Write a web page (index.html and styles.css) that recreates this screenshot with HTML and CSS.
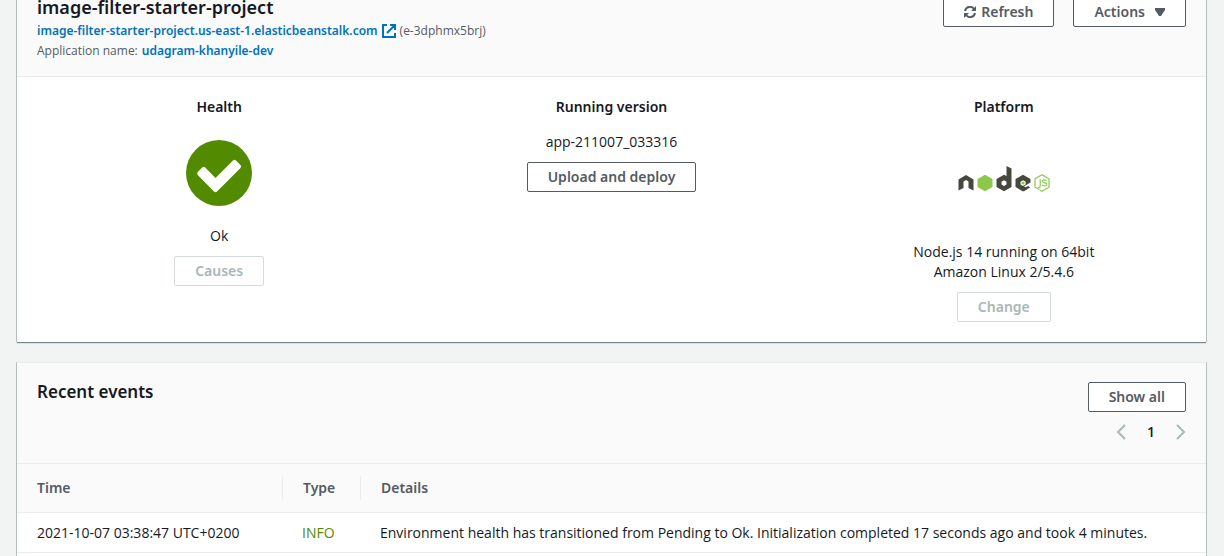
FILE: index.html
```html
<!DOCTYPE html>
<html lang="en">
<head>
<meta charset="utf-8">
<meta name="viewport" content="width=device-width, initial-scale=1">
<title>image-filter-starter-project</title>
<link rel="stylesheet" href="styles.css">
</head>
<body>
<main class="page">
  <section class="panel">
    <header class="panel-header">
      <div class="env-info">
        <h1 class="title">image-filter-starter-project</h1>
        <p class="meta">
          <a class="link" href="#">image-filter-starter-project.us-east-1.elasticbeanstalk.com</a>
          <svg class="external" viewBox="0 0 14 14" fill="none" stroke="currentColor" stroke-width="2" aria-hidden="true"><path d="M5 1H1v12h12V9M8 1h5v5M13 1L5 9"/></svg>
          <span>(e-3dphmx5brj)</span>
        </p>
        <p class="meta">Application name: <a class="link" href="#">udagram-khanyile-dev</a></p>
      </div>
      <div class="actions">
        <button class="btn" type="button">
          <svg class="refresh" viewBox="0 0 12 12" fill="none" stroke="currentColor" stroke-width="2" aria-hidden="true"><path d="M1 5a5 5 0 0 1 9-2M11 7a5 5 0 0 1-9 2"/><path d="M12 0v5H7zM0 12V7h5z" fill="currentColor" stroke="none"/></svg>
          Refresh
        </button>
        <button class="btn" type="button">
          Actions
          <svg class="caret" viewBox="0 0 10 8" fill="currentColor" aria-hidden="true"><path d="M0 0h10v2L6 8H4L0 2z"/></svg>
        </button>
      </div>
    </header>
    <div class="summary">
      <section class="column">
        <h2 class="label">Health</h2>
        <svg class="health" viewBox="0 0 66 66" role="img" aria-label="Ok"><circle cx="33" cy="33" r="33" fill="#538b00"/><path d="M12.200 31.500l4-4q1.500-1.500 3 0L29.500 38 47 20.500q1.500-1.500 3 0l4.500 4.500q1.500 1.500 0 3L31 51.500q-1.500 1.500-3 0L12.200 35.500q-2-2 0-4z" fill="#fff"/></svg>
        <p class="value">Ok</p>
        <button class="btn" type="button" disabled>Causes</button>
      </section>
      <section class="column">
        <h2 class="label">Running version</h2>
        <p class="value">app-211007_033316</p>
        <button class="btn" type="button">Upload and deploy</button>
      </section>
      <section class="column">
        <h2 class="label">Platform</h2>
        <svg class="node-logo" viewBox="0 0 92 100" role="img" aria-label="node js">
          <g fill="#46483e">
            <path d="M0.500 39.500l7.500-4.500 7.500 4.500v11l-5-2.500v-6.500L8 40l-2.500 1.500V48l-5 2.500z"/>
            <path fill-rule="evenodd" d="M48.500 26l5 2.500v18.500L46 51.300 38.500 47v-8l7.500-4.300 2.500 1.300zM46 40.300l-2.500 1.400v2.900L46 46l2.500-1.400v-2.900z"/>
            <path d="M65 34.700l7.500 4.300v3.500L66 46.300l1.500 1 3-1.300 1.500 1.500-6 3.800h-1.500L57.500 47v-8z"/>
          </g>
          <path fill="#fff" d="M65 40.300l2.700 1.500v2.400L65 46l-2.500-1.500v-2.700z"/>
          <circle cx="65" cy="43" r="1.600" fill="#8cc84b"/>
          <path fill="#8cc84b" d="M27 34.700l7.500 4.300v8L27 51.300 19.500 47v-8z"/>
          <g fill="none" stroke="#8cc84b" stroke-width="1.200"><path d="M81.500 49.500L77 47.200v-8.400l7-4 7 4v8.400l-7 4-2-1"/><path d="M82.200 39.300v6.700q0 2-2.200 1.500M88.500 40.500q-4-1.500-4 .8 0 1.400 2.300 1.600 2.300.2 2 2-.7 1.800-4.800.4"/></g>
        </svg>
        <p class="value">Node.js 14 running on 64bit<br>Amazon Linux 2/5.4.6</p>
        <button class="btn" type="button" disabled>Change</button>
      </section>
    </div>
  </section>

  <section class="panel">
    <header class="panel-header events-header">
      <h2 class="title">Recent events</h2>
      <div class="events-tools">
        <button class="btn" type="button">Show all</button>
        <nav class="pager" aria-label="Pages">
          <button class="page-arrow" type="button" aria-label="Previous page" disabled><svg viewBox="0 0 10 16" fill="none" stroke="currentColor" stroke-width="2"><path d="M9 1L2 8l7 7"/></svg></button>
          <span class="page-number">1</span>
          <button class="page-arrow" type="button" aria-label="Next page" disabled><svg viewBox="0 0 10 16" fill="none" stroke="currentColor" stroke-width="2"><path d="M1 1l7 7-7 7"/></svg></button>
        </nav>
      </div>
    </header>
    <table class="events">
      <thead>
        <tr><th class="time" scope="col"><span>Time</span></th><th class="type" scope="col"><span>Type</span></th><th scope="col"><span>Details</span></th></tr>
      </thead>
      <tbody>
        <tr><td>2021-10-07 03:38:47 UTC+0200</td><td class="info">INFO</td><td>Environment health has transitioned from Pending to Ok. Initialization completed 17 seconds ago and took 4 minutes.</td></tr>
      </tbody>
    </table>
  </section>
</main>
</body>
</html>
```
FILE: styles.css
```css
* { box-sizing: border-box; }
html { height: 100%; overflow: hidden; }
body {
  margin: 0;
  height: 100%;
  overflow: hidden;
  background: #f2f3f3;
  color: #16191f;
  font: 14px/20px "Open Sans", "Noto Sans", sans-serif;
}
h1, h2, p { margin: 0; }
svg { display: block; flex: none; }

.page {
  display: flex;
  flex-direction: column;
  gap: 20px;
  margin-top: -24px;
  padding: 0 18px 0 17px;
}
.panel {
  background: #fff;
  border-top: 1px solid #eaeded;
  box-shadow: 0 1px 1px 0 rgba(0, 28, 36, .5), 1px 0 0 0 #c8cfcf, -1px 0 0 0 #c8cfcf;
}
.panel:last-child { padding-bottom: 20px; }
.panel-header {
  display: flex;
  justify-content: space-between;
  align-items: flex-start;
  background: #fafafa;
  border-bottom: 1px solid #eaeded;
  padding: 20px 20px 15px;
}
.title { font-family: "Noto Sans", sans-serif; font-size: 18px; line-height: 20px; font-weight: 600; }
.env-info { display: flex; flex-direction: column; }
.title + .meta { margin-top: 4px; }
.meta {
  display: flex;
  align-items: center;
  gap: 4px;
  font-size: 12px;
  color: #545b64;
}
.link { color: #0073bb; font-family: "Noto Sans", sans-serif; font-weight: 600; text-decoration: none; }
.external { width: 14px; height: 14px; color: #0073bb; }
.actions { display: flex; gap: 19px; }

.btn {
  display: inline-flex;
  align-items: center;
  justify-content: center;
  height: 30px;
  padding: 0 20px;
  border: 1px solid #545b64;
  border-radius: 2px;
  background: #fff;
  color: #545b64;
  font: 600 14px/20px "Noto Sans", sans-serif;
  white-space: nowrap;
}
.btn:disabled { border-color: #d5dbdb; color: #aab7b8; }
.refresh { width: 12px; height: 12px; margin-right: 5px; }
.caret { width: 10px; height: 8px; margin-left: 10px; }

.summary {
  display: grid;
  grid-template-columns: repeat(3, 1fr);
  padding: 20px 6px;
}
.column { display: flex; flex-direction: column; align-items: center; text-align: center; }
.label { font: 600 14px/20px "Noto Sans", sans-serif; margin-bottom: 15px; }
.value { margin-bottom: 10px; }
.health { width: 66px; height: 66px; margin: 8px 0 20px; }
.node-logo { width: 92px; height: 100px; margin: 8px 0 2px; }

.events-header { padding: 19px 20px 21px; }
.events-header .title { font-size: 17px; }
.events-tools { display: flex; flex-direction: column; align-items: flex-end; gap: 10px; }
.pager { display: flex; align-items: center; gap: 21px; height: 20px; }
.page-number { font-weight: 600; }
.page-arrow { border: 0; padding: 0; background: none; color: #aab7b8; }
.page-arrow svg { width: 10px; height: 16px; }

.events { width: 100%; border-collapse: collapse; table-layout: fixed; }
.events th {
  padding: 12px 0;
  text-align: left;
  font-family: "Noto Sans", sans-serif;
  font-weight: 600;
  color: #545b64;
  background: #fafafa;
  border-bottom: 1px solid #eaeded;
}
.events th span { display: block; padding-left: 20px; line-height: 24px; }
.events th + th span { border-left: 1px solid #eaeded; }
.events td { height: 40px; padding: 0 20px; border-bottom: 1px solid #eaeded; white-space: nowrap; }
.events .time { width: 265px; }
.events .type { width: 78px; }
.events .info { color: #538b00; padding-right: 0; }
```
